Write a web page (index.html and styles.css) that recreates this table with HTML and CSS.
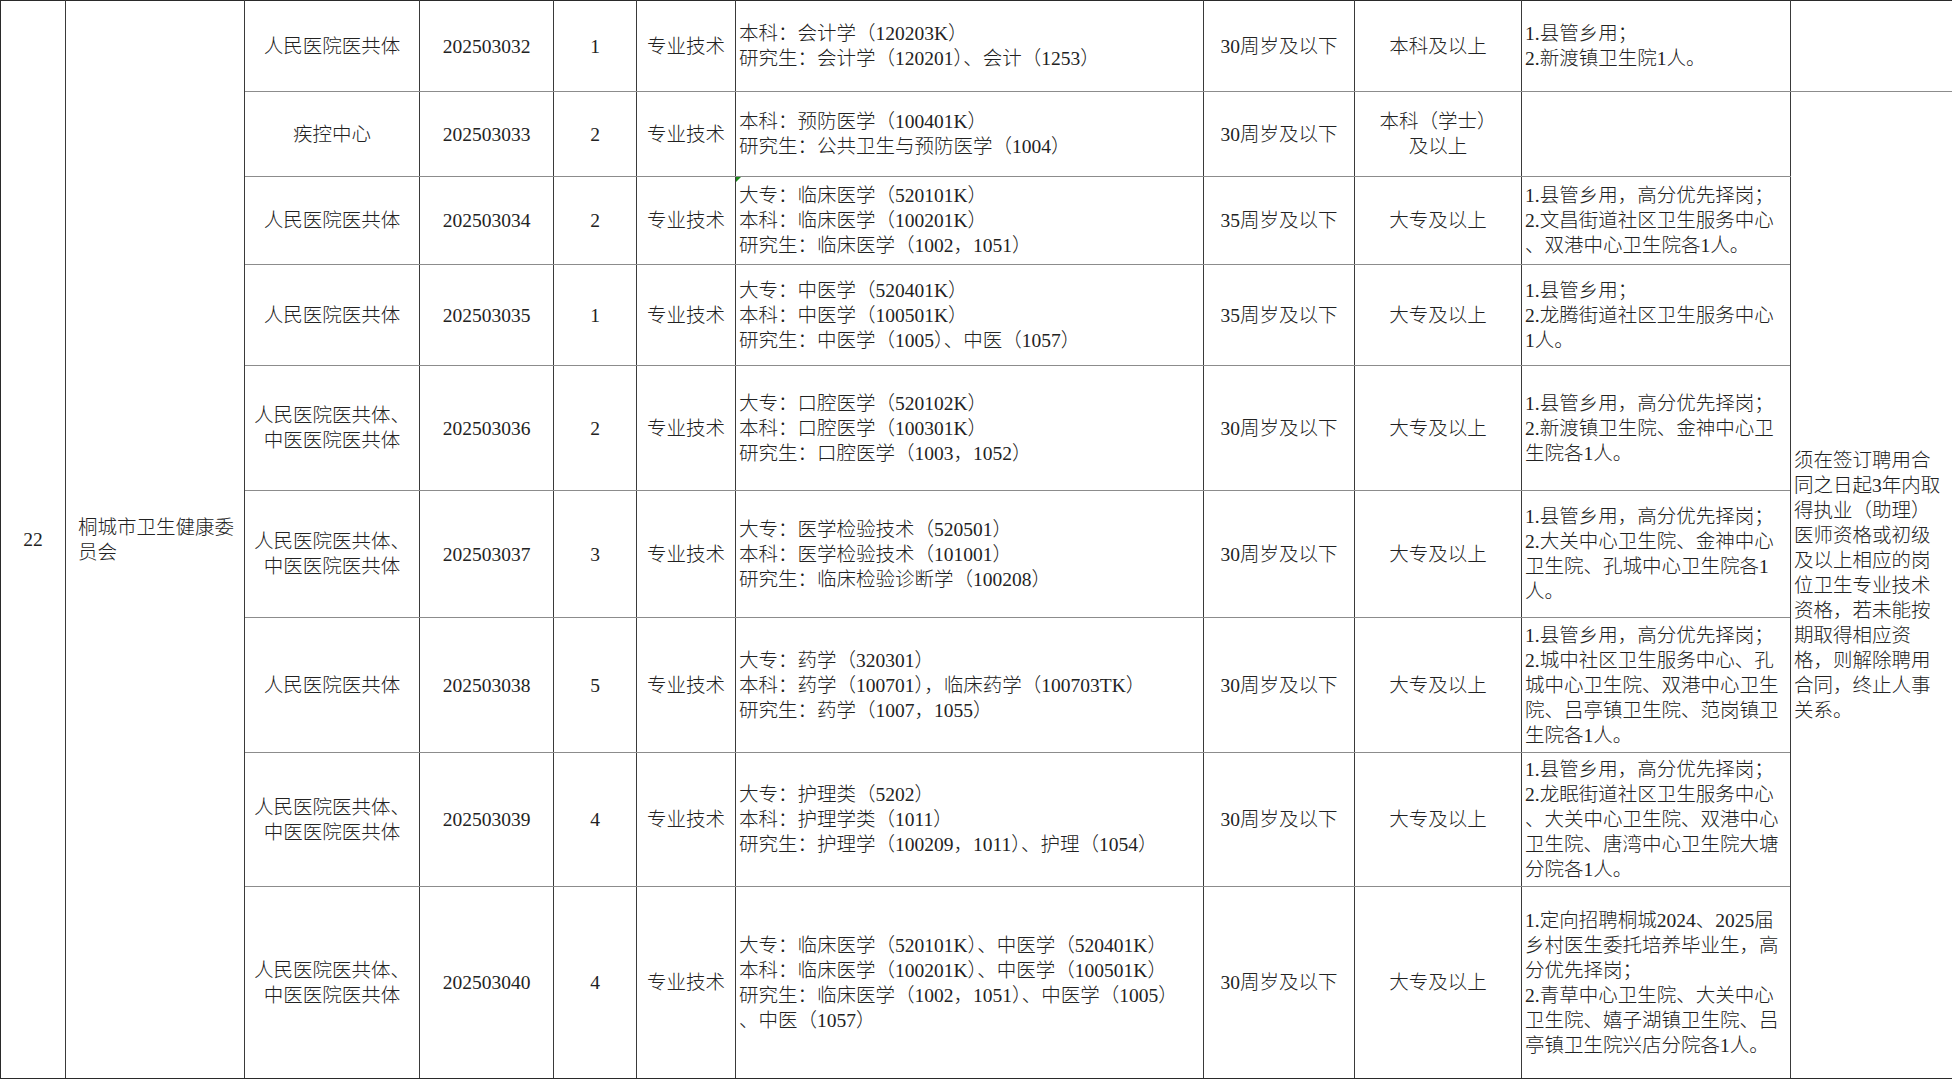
FILE: index.html
```html
<!DOCTYPE html>
<html lang="zh-CN">
<head>
<meta charset="utf-8">
<title>岗位表</title>
<link rel="stylesheet" href="styles.css">
</head>
<body>
<table class="sheet">
<colgroup>
<col class="w-no"><col class="w-dept"><col class="w-unit"><col class="w-code"><col class="w-num"><col class="w-type"><col class="w-major"><col class="w-age"><col class="w-edu"><col class="w-note"><col class="w-rem">
</colgroup>
<tbody>
<tr class="r1">
<td rowspan="9" class="ctr edge-l edge-t edge-b">22</td>
<td rowspan="9" class="dept edge-t edge-b">桐城市卫生健康委<br>员会</td>
<td class="ctr edge-t">人民医院医共体</td>
<td class="ctr edge-t">202503032</td>
<td class="ctr edge-t">1</td>
<td class="ctr edge-t">专业技术</td>
<td class="lft edge-t">本科：会计学（120203K）<br>研究生：会计学（120201）、会计（1253）</td>
<td class="ctr edge-t">30周岁及以下</td>
<td class="ctr edge-t">本科及以上</td>
<td class="lft edge-t">1.县管乡用；<br>2.新渡镇卫生院1人。</td>
<td class="lft edge-t edge-r"></td>
</tr>
<tr class="r2">
<td class="ctr">疾控中心</td>
<td class="ctr">202503033</td>
<td class="ctr">2</td>
<td class="ctr">专业技术</td>
<td class="lft">本科：预防医学（100401K）<br>研究生：公共卫生与预防医学（1004）</td>
<td class="ctr">30周岁及以下</td>
<td class="ctr">本科（学士）<br>及以上</td>
<td class="lft"></td>
<td rowspan="8" class="lft edge-r edge-b">须在签订聘用合<br>同之日起3年内取<br>得执业（助理）<br>医师资格或初级<br>及以上相应的岗<br>位卫生专业技术<br>资格，若未能按<br>期取得相应资<br>格，则解除聘用<br>合同，终止人事<br>关系。</td>
</tr>
<tr class="r3">
<td class="ctr">人民医院医共体</td>
<td class="ctr">202503034</td>
<td class="ctr">2</td>
<td class="ctr">专业技术</td>
<td class="lft flag">大专：临床医学（520101K）<br>本科：临床医学（100201K）<br>研究生：临床医学（1002，1051）</td>
<td class="ctr">35周岁及以下</td>
<td class="ctr">大专及以上</td>
<td class="lft">1.县管乡用，高分优先择岗；<br>2.文昌街道社区卫生服务中心<br>、双港中心卫生院各1人。</td>
</tr>
<tr class="r4">
<td class="ctr">人民医院医共体</td>
<td class="ctr">202503035</td>
<td class="ctr">1</td>
<td class="ctr">专业技术</td>
<td class="lft">大专：中医学（520401K）<br>本科：中医学（100501K）<br>研究生：中医学（1005）、中医（1057）</td>
<td class="ctr">35周岁及以下</td>
<td class="ctr">大专及以上</td>
<td class="lft">1.县管乡用；<br>2.龙腾街道社区卫生服务中心<br>1人。</td>
</tr>
<tr class="r5">
<td class="ctr">人民医院医共体、<br>中医医院医共体</td>
<td class="ctr">202503036</td>
<td class="ctr">2</td>
<td class="ctr">专业技术</td>
<td class="lft">大专：口腔医学（520102K）<br>本科：口腔医学（100301K）<br>研究生：口腔医学（1003，1052）</td>
<td class="ctr">30周岁及以下</td>
<td class="ctr">大专及以上</td>
<td class="lft">1.县管乡用，高分优先择岗；<br>2.新渡镇卫生院、金神中心卫<br>生院各1人。</td>
</tr>
<tr class="r6">
<td class="ctr">人民医院医共体、<br>中医医院医共体</td>
<td class="ctr">202503037</td>
<td class="ctr">3</td>
<td class="ctr">专业技术</td>
<td class="lft">大专：医学检验技术（520501）<br>本科：医学检验技术（101001）<br>研究生：临床检验诊断学（100208）</td>
<td class="ctr">30周岁及以下</td>
<td class="ctr">大专及以上</td>
<td class="lft">1.县管乡用，高分优先择岗；<br>2.大关中心卫生院、金神中心<br>卫生院、孔城中心卫生院各1<br>人。</td>
</tr>
<tr class="r7">
<td class="ctr">人民医院医共体</td>
<td class="ctr">202503038</td>
<td class="ctr">5</td>
<td class="ctr">专业技术</td>
<td class="lft">大专：药学（320301）<br>本科：药学（100701），临床药学（100703TK）<br>研究生：药学（1007，1055）</td>
<td class="ctr">30周岁及以下</td>
<td class="ctr">大专及以上</td>
<td class="lft">1.县管乡用，高分优先择岗；<br>2.城中社区卫生服务中心、孔<br>城中心卫生院、双港中心卫生<br>院、吕亭镇卫生院、范岗镇卫<br>生院各1人。</td>
</tr>
<tr class="r8">
<td class="ctr">人民医院医共体、<br>中医医院医共体</td>
<td class="ctr">202503039</td>
<td class="ctr">4</td>
<td class="ctr">专业技术</td>
<td class="lft">大专：护理类（5202）<br>本科：护理学类（1011）<br>研究生：护理学（100209，1011）、护理（1054）</td>
<td class="ctr">30周岁及以下</td>
<td class="ctr">大专及以上</td>
<td class="lft">1.县管乡用，高分优先择岗；<br>2.龙眠街道社区卫生服务中心<br>、大关中心卫生院、双港中心<br>卫生院、唐湾中心卫生院大塘<br>分院各1人。</td>
</tr>
<tr class="r9">
<td class="ctr edge-b">人民医院医共体、<br>中医医院医共体</td>
<td class="ctr edge-b">202503040</td>
<td class="ctr edge-b">4</td>
<td class="ctr edge-b">专业技术</td>
<td class="lft edge-b">大专：临床医学（520101K）、中医学（520401K）<br>本科：临床医学（100201K）、中医学（100501K）<br>研究生：临床医学（1002，1051）、中医学（1005）<br>、中医（1057）</td>
<td class="ctr edge-b">30周岁及以下</td>
<td class="ctr edge-b">大专及以上</td>
<td class="lft edge-b">1.定向招聘桐城2024、2025届<br>乡村医生委托培养毕业生，高<br>分优先择岗；<br>2.青草中心卫生院、大关中心<br>卫生院、嬉子湖镇卫生院、吕<br>亭镇卫生院兴店分院各1人。</td>
</tr>
</tbody>
</table>
</body>
</html>
```
FILE: styles.css
```css
html, body {
  margin: 0;
  padding: 0;
  background: #ffffff;
}

body {
  font-family: "Liberation Serif", "Noto Sans CJK SC", serif;
  font-size: 19.5px;
  font-weight: 300;
  line-height: 25px;
  color: #222222;
}

.sheet {
  border-collapse: collapse;
  table-layout: fixed;
  width: 1952px;
}

.w-no { width: 65px; }
.w-dept { width: 179px; }
.w-unit { width: 175px; }
.w-code { width: 134px; }
.w-num { width: 83px; }
.w-type { width: 99px; }
.w-major { width: 468px; }
.w-age { width: 151px; }
.w-edu { width: 167px; }
.w-note { width: 269px; }
.w-rem { width: 162px; }

.sheet td {
  border-left: 1px solid #3a3a3a;
  border-right: 1px solid #3a3a3a;
  border-top: 1px solid #8c8c8c;
  border-bottom: 1px solid #8c8c8c;
  padding: 0 3px;
  vertical-align: middle;
  white-space: nowrap;
  overflow: hidden;
}

.sheet td.edge-t { border-top-color: #2a2a2a; }
.sheet td.edge-b { border-bottom-color: #2a2a2a; }
.sheet td.edge-l { border-left-color: #2a2a2a; }
.sheet td.edge-r { border-right-color: #111111; }

.r1 { height: 91px; }
.r2 { height: 85px; }
.r3 { height: 88px; }
.r4 { height: 101px; }
.r5 { height: 125px; }
.r6 { height: 127px; }
.r7 { height: 135px; }
.r8 { height: 134px; }
.r9 { height: 192px; }

.ctr { text-align: center; }
.lft { text-align: left; }

.sheet td.dept {
  text-align: left;
  padding-left: 12px;
}

.flag { position: relative; }
.flag::before {
  content: "";
  position: absolute;
  left: 0;
  top: 0;
  border-top: 5px solid #1a8a1a;
  border-right: 5px solid transparent;
}
```
